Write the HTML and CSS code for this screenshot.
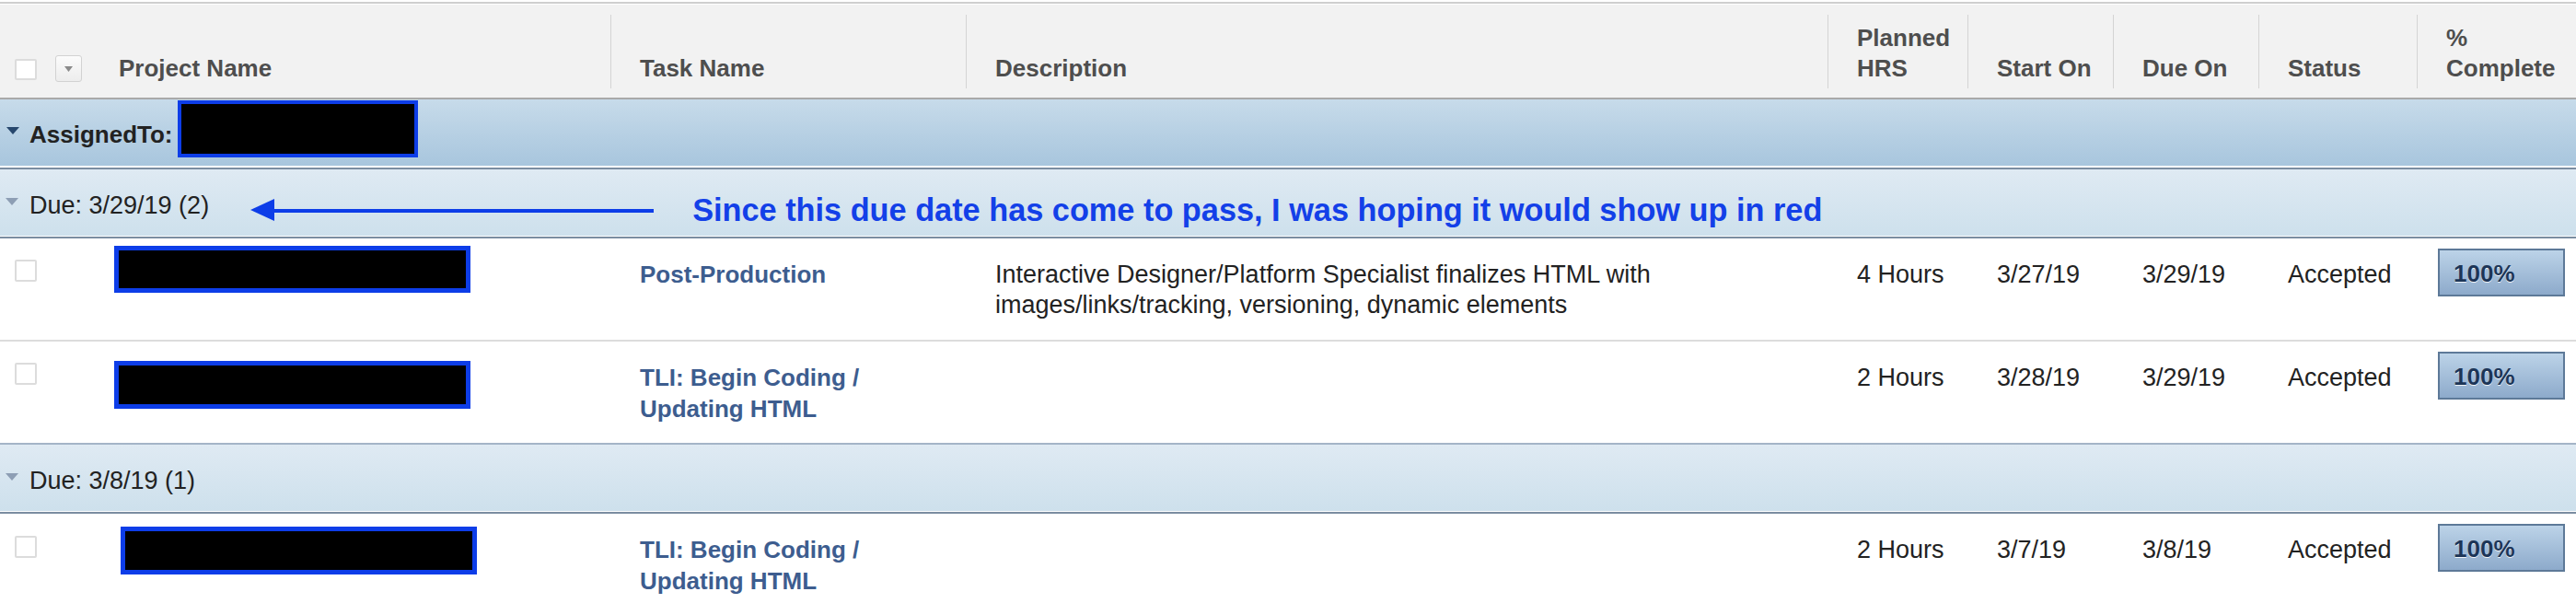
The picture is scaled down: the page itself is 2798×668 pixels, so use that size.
FILE: index.html
```html
<!DOCTYPE html>
<html>
<head>
<meta charset="utf-8">
<title>Tasks</title>
<link rel="stylesheet" href="styles.css">
</head>
<body>
<div class="table">
  <div class="hdr cols">
    <div class="hcell hsel">
      <span class="cb hcb"></span>
      <span class="dd"><svg width="9" height="6" viewBox="0 0 9 6"><polygon points="0,0 9,0 4.5,6" fill="#8a8a8a"/></svg></span>
    </div>
    <div class="hcell nosep">Project Name</div>
    <div class="hcell">Task Name</div>
    <div class="hcell">Description</div>
    <div class="hcell">Planned<br>HRS</div>
    <div class="hcell">Start On</div>
    <div class="hcell">Due On</div>
    <div class="hcell">Status</div>
    <div class="hcell">%<br>Complete</div>
  </div>

  <div class="group assigned">
    <svg class="tri" width="14" height="9" viewBox="0 0 14 9"><polygon points="0,0 14,0 7,8" fill="#27476d"/></svg>
    <span class="glabel bold">AssignedTo:</span>
    <span class="redact rgroup"></span>
  </div>

  <div class="group due">
    <svg class="tri" width="14" height="9" viewBox="0 0 14 9"><polygon points="0,0 14,0 7,8" fill="#8d9eb4"/></svg>
    <span class="glabel">Due: 3/29/19 (2)</span>
    <svg class="arrow" width="438" height="24" viewBox="0 0 438 24"><polygon points="0,12 26,0 26,24" fill="#0d3de8"/><rect x="24" y="11" width="414" height="4" fill="#0d3de8"/></svg>
    <span class="note">Since this due date has come to pass, I was hoping it would show up in red</span>
  </div>

  <div class="row cols line">
    <div class="c sel"><span class="cb"></span></div>
    <div class="c proj"><span class="redact r1"></span></div>
    <div class="c task">Post-Production</div>
    <div class="c">Interactive Designer/Platform Specialist finalizes HTML with<br>images/links/tracking, versioning, dynamic elements</div>
    <div class="c">4 Hours</div>
    <div class="c">3/27/19</div>
    <div class="c">3/29/19</div>
    <div class="c">Accepted</div>
    <div class="c pct"><span class="pbox">100%</span></div>
  </div>

  <div class="row cols">
    <div class="c sel"><span class="cb"></span></div>
    <div class="c proj"><span class="redact r2"></span></div>
    <div class="c task">TLI: Begin Coding /<br>Updating HTML</div>
    <div class="c"></div>
    <div class="c">2 Hours</div>
    <div class="c">3/28/19</div>
    <div class="c">3/29/19</div>
    <div class="c">Accepted</div>
    <div class="c pct"><span class="pbox">100%</span></div>
  </div>

  <div class="group due due2">
    <svg class="tri" width="14" height="9" viewBox="0 0 14 9"><polygon points="0,0 14,0 7,8" fill="#8d9eb4"/></svg>
    <span class="glabel">Due: 3/8/19 (1)</span>
  </div>

  <div class="row cols r3row">
    <div class="c sel"><span class="cb"></span></div>
    <div class="c proj"><span class="redact r3"></span></div>
    <div class="c task">TLI: Begin Coding /<br>Updating HTML</div>
    <div class="c"></div>
    <div class="c">2 Hours</div>
    <div class="c">3/7/19</div>
    <div class="c">3/8/19</div>
    <div class="c">Accepted</div>
    <div class="c pct"><span class="pbox">100%</span></div>
  </div>
</div>
</body>
</html>
```

FILE: styles.css
```css
html, body {
  margin: 0;
  padding: 0;
  overflow: hidden;
  background: #fff;
}
body {
  font-family: "Liberation Sans", Arial, sans-serif;
  font-size: 26px;
  color: #222;
}
.table {
  width: 2798px;
  margin-top: 2px;
  border-top: 2px solid #cfcfcf;
}
.cols {
  display: grid;
  grid-template-columns: 97px 566px 386px 936px 152px 158px 158px 172px 173px;
}

/* header */
.hdr {
  border-top: 1px solid #fff;
  background: #f2f2f2;
  padding: 11px 0 10px;
  border-bottom: 2px solid #a9a9a9;
}
.hcell {
  height: 80px;
  box-sizing: border-box;
  border-left: 1px solid #d4d4d4;
  padding: 0 0 5px 31px;
  display: flex;
  align-items: flex-end;
  font-weight: bold;
  color: #4e4e4e;
  line-height: 33px;
}
.hcell.nosep { border-left: 0; padding-left: 32px; }
.hcell.hsel {
  border-left: 0;
  padding: 0 0 7px 16px;
  align-items: flex-end;
  gap: 20px;
}
.cb {
  display: block;
  width: 24px;
  height: 24px;
  box-sizing: border-box;
  border: 2px solid #dcdcdc;
  border-radius: 2px;
  background: #fff;
}
.hcb { height: 23px; margin-bottom: 2px; }
.dd {
  width: 29px;
  height: 29px;
  box-sizing: border-box;
  border: 1px solid #d2d2d2;
  border-radius: 3px;
  background: linear-gradient(#fbfbfb, #ededed);
  display: flex;
  align-items: center;
  justify-content: center;
}

/* group rows */
.group {
  display: flex;
  align-items: flex-start;
  border-bottom: 2px solid #7b8da1;
  line-height: 33px;
}
.assigned {
  height: 74px;
  background: linear-gradient(#c7dbea, #a7c5dd);
  box-shadow: inset 0 -2px 0 #fff;
}
.due {
  height: 73px;
  background: linear-gradient(#dfeaf3, #cde0ec);
  box-shadow: inset 0 -1px 0 #fff;
}
.due2 { border-top: 2px solid #a4b4c7; }
.tri { margin: 30px 0 0 7px; flex: none; }
.due .tri { margin: 31px 0 0 6px; }
.glabel { margin: 22px 0 0 11px; white-space: nowrap; }
.due .glabel { margin-left: 12px; margin-top: 23px; font-size: 27px; }
.bold { font-weight: bold; }
.redact {
  display: block;
  box-sizing: border-box;
  background: #000;
  border: 5px solid #0d3de8;
}
.rgroup {
  width: 261px;
  height: 62px;
  margin: 1px 0 0 5px;
  border-width: 4px;
}
.arrow { margin: 32px 0 0 45px; flex: none; }
.note {
  margin: 24px 0 0 42px;
  font-size: 34.3px;
  line-height: 40px;
  font-weight: bold;
  color: #1340e8;
  white-space: nowrap;
}

/* data rows */
.row { height: 110px; }
.row.line { border-bottom: 2px solid #dcdcdc; }
.c {
  padding: 23px 0 0 32px;
  font-size: 27px;
  line-height: 33px;
  color: #222;
  white-space: nowrap;
}
.c.sel { padding: 23px 0 0 16px; }
.r3row .c.sel { padding-top: 24px; }
.c.proj { padding: 0; }
.c.task {
  font-size: 26px;
  color: #3d5d8f;
  font-weight: bold;
  line-height: 34px;
  padding-top: 22px;
}
.r1 { width: 387px; height: 51px; margin: 8px 0 0 27px; }
.r2 { width: 387px; height: 52px; margin: 21px 0 0 27px; }
.r3 { width: 387px; height: 52px; margin: 14px 0 0 34px; }
.c.pct { padding: 11px 0 0 23px; }
.pbox {
  display: block;
  width: 138px;
  height: 52px;
  box-sizing: border-box;
  border: 2px solid #5d7998;
  background: linear-gradient(#bcd3e8, #8daacb);
  padding: 3px 0 0 15px;
  font-size: 26px;
  line-height: 45px;
  font-weight: bold;
  color: #1c3557;
  text-shadow: 0 1px 0 rgba(255,255,255,0.85);
}
```
